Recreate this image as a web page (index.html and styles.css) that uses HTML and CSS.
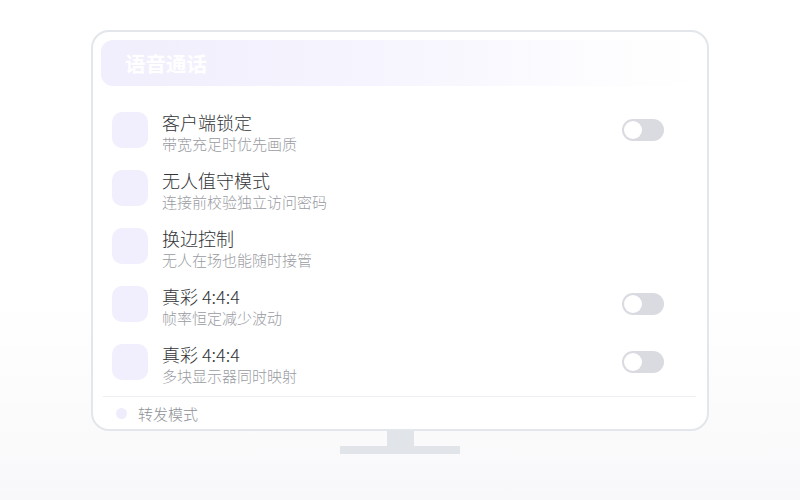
FILE: index.html
```html
<!DOCTYPE html>
<html lang="zh-CN">
<head>
  <meta charset="UTF-8">
  <title>语音通话</title>
  <link rel="stylesheet" href="styles.css">
</head>
<body>
  <div class="monitor">
    <div class="screen">
      <div class="header">
        <h1>语音通话</h1>
      </div>

      <ul class="settings">
        <li class="row">
          <div class="icon"></div>
          <div class="text">
            <div class="title">客户端锁定</div>
            <div class="desc">带宽充足时优先画质</div>
          </div>
          <div class="toggle"></div>
        </li>
        <li class="row">
          <div class="icon"></div>
          <div class="text">
            <div class="title">无人值守模式</div>
            <div class="desc">连接前校验独立访问密码</div>
          </div>
        </li>
        <li class="row">
          <div class="icon"></div>
          <div class="text">
            <div class="title">换边控制</div>
            <div class="desc">无人在场也能随时接管</div>
          </div>
        </li>
        <li class="row">
          <div class="icon"></div>
          <div class="text">
            <div class="title">真彩 4:4:4</div>
            <div class="desc">帧率恒定减少波动</div>
          </div>
          <div class="toggle"></div>
        </li>
        <li class="row">
          <div class="icon"></div>
          <div class="text">
            <div class="title">真彩 4:4:4</div>
            <div class="desc">多块显示器同时映射</div>
          </div>
          <div class="toggle"></div>
        </li>
      </ul>

      <div class="footer">
        <span class="dot"></span>
        <span>转发模式</span>
      </div>
    </div>
    <div class="neck"></div>
    <div class="base"></div>
  </div>
</body>
</html>
```

FILE: styles.css
```css
body {
  margin: 0;
  height: 500px;
  font-family: "Noto Sans CJK SC", "Noto Sans", sans-serif;
  background: linear-gradient(#ffffff 60%, #f8f8fa);
  color: #333;
}

.monitor {
  width: 618px;
  margin: 0 auto;
  padding-top: 30px;
  display: flex;
  flex-direction: column;
  align-items: center;
}

.screen {
  width: 100%;
  box-sizing: border-box;
  border: 2px solid #e3e6ea;
  border-radius: 18px;
  padding: 8px 8px 0;
  background: #fff;
}

.header {
  height: 46px;
  border-radius: 12px;
  padding-left: 24px;
  display: flex;
  align-items: center;
  background: linear-gradient(90deg, #f1eefd 0%, #f6f4fe 45%, #fdfdff 85%, #ffffff 100%);
}

.header h1 {
  margin: 0;
  font-size: 20.5px;
  font-weight: bold;
  color: #fff;
}

.settings {
  list-style: none;
  margin: 15px 0 0;
  padding: 0;
}

.row {
  height: 58px;
  display: flex;
  align-items: center;
  padding: 0 35px 0 11px;
}

.icon {
  width: 36px;
  height: 36px;
  border-radius: 10px;
  background-color: #f1eefd;
  flex-shrink: 0;
}

.text {
  flex: 1;
  margin-left: 14px;
  padding-top: 6px;
}

.title {
  font-size: 18px;
  line-height: 22px;
  font-weight: 300;
  color: #333438;
}

.desc {
  font-size: 15px;
  line-height: 22px;
  font-weight: 300;
  color: #9a9ca3;
}

.toggle {
  width: 42px;
  height: 22px;
  border-radius: 11px;
  background-color: #d9dbe1;
  position: relative;
}

.toggle::after {
  content: "";
  position: absolute;
  left: 2px;
  top: 2px;
  width: 18px;
  height: 18px;
  border-radius: 50%;
  background: #fff;
}

.footer {
  margin: 5px 3px 0 2px;
  border-top: 1px solid #eceef1;
  height: 32px;
  display: flex;
  align-items: center;
  padding-left: 13px;
  font-size: 15px;
  font-weight: 300;
  color: #8e9096;
}

.dot {
  width: 11px;
  height: 11px;
  border-radius: 50%;
  background-color: #efecfc;
  margin-right: 11px;
}

.neck {
  width: 27px;
  height: 15px;
  background-color: #e1e4e9;
}

.base {
  width: 120px;
  height: 8px;
  background-color: #e1e4e9;
}
```
